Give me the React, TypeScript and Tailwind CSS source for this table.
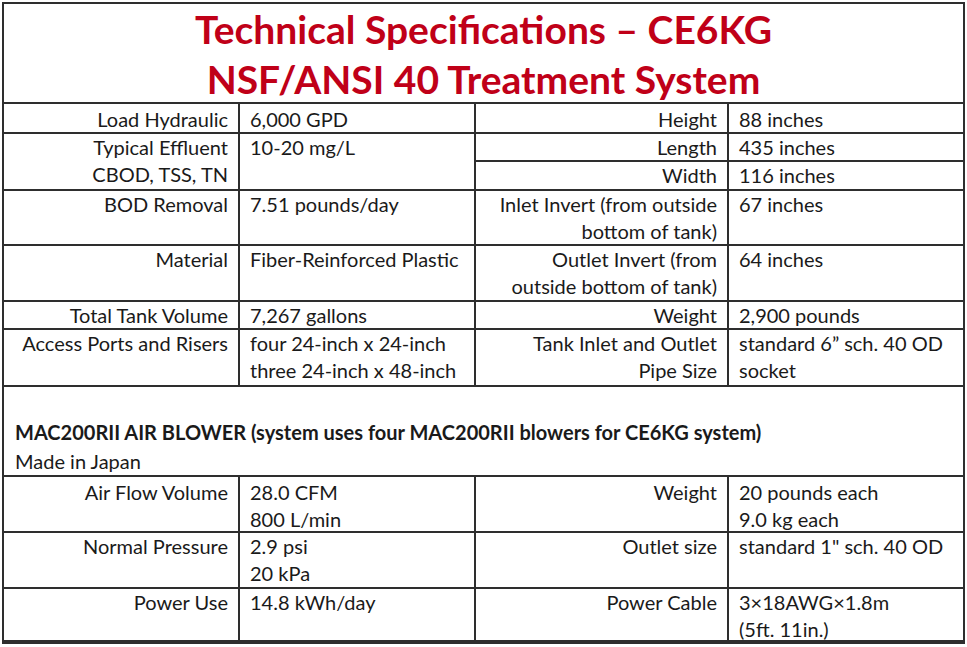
function Label({ lines, className = '' }: { lines: string[]; className?: string }) {
  return (
    <div className={`border-b-2 border-r-2 border-[#2e2e2e] pr-[10px] text-right leading-[27px] ${className}`}>
      {lines.map((t) => (
        <div key={t}>{t}</div>
      ))}
    </div>
  )
}

function Value({ lines, last = false, className = '' }: { lines: string[]; last?: boolean; className?: string }) {
  return (
    <div className={`border-b-2 border-[#2e2e2e] pl-[10px] leading-[27px] ${last ? '' : 'border-r-2'} ${className}`}>
      {lines.map((t) => (
        <div key={t}>{t}</div>
      ))}
    </div>
  )
}

export default function App() {
  return (
    <div className="min-h-screen bg-white pl-[2px] pt-[2px] font-['Lato','Liberation_Sans',sans-serif] text-[20px] leading-[28px] text-[#1a1a1a]">
      <div className="w-[963px] border-2 border-[#2e2e2e]">
        {/* Title */}
        <div className="h-[100px] border-b-2 border-[#2e2e2e] text-center text-[39px] font-bold leading-[50px] text-[#c00018]">
          <div>Technical Specifications – CE6KG</div>
          <div>NSF/ANSI 40 Treatment System</div>
        </div>

        {/* Tank specs */}
        <div className="grid grid-cols-[236px_236px_253px_234px] grid-rows-[30px_28px_29px_55px_56px_28px_57px]">
          <Label lines={['Load Hydraulic']} className="pt-[2px]" />
          <Value lines={['6,000 GPD']} className="pt-[2px]" />
          <Label lines={['Height']} className="pt-[2px]" />
          <Value lines={['88 inches']} last className="pt-[2px]" />

          <Label lines={['Typical Effluent', 'CBOD, TSS, TN']} className="row-span-2" />
          <Value lines={['10-20 mg/L']} className="row-span-2" />
          <Label lines={['Length']} />
          <Value lines={['435 inches']} last />
          <Label lines={['Width']} />
          <Value lines={['116 inches']} last />

          <Label lines={['BOD Removal']} />
          <Value lines={['7.51 pounds/day']} />
          <Label lines={['Inlet Invert (from outside', 'bottom of tank)']} />
          <Value lines={['67 inches']} last />

          <Label lines={['Material']} />
          <Value lines={['Fiber-Reinforced Plastic']} />
          <Label lines={['Outlet Invert (from', 'outside bottom of tank)']} />
          <Value lines={['64 inches']} last />

          <Label lines={['Total Tank Volume']} />
          <Value lines={['7,267 gallons']} />
          <Label lines={['Weight']} />
          <Value lines={['2,900 pounds']} last />

          <Label lines={['Access Ports and Risers']} />
          <Value lines={['four 24-inch x 24-inch', 'three 24-inch x 48-inch']} />
          <Label lines={['Tank Inlet and Outlet', 'Pipe Size']} />
          <Value lines={['standard 6” sch. 40 OD', 'socket']} last />
        </div>

        {/* Blower heading */}
        <div className="h-[90px] border-b-2 border-[#2e2e2e] pl-[11px] pt-[31px] leading-[29px]">
          <div className="font-bold">
            MAC200RII AIR BLOWER (system uses four MAC200RII blowers for CE6KG system)
          </div>
          <div>Made in Japan</div>
        </div>

        {/* Blower specs */}
        <div className="grid grid-cols-[236px_236px_253px_234px] grid-rows-[56px_56px_53px]">
          <Label lines={['Air Flow Volume']} className="pt-[2px]" />
          <Value lines={['28.0 CFM', '800 L/min']} className="pt-[2px]" />
          <Label lines={['Weight']} className="pt-[2px]" />
          <Value lines={['20 pounds each', '9.0 kg each']} last className="pt-[2px]" />

          <Label lines={['Normal Pressure']} />
          <Value lines={['2.9 psi', '20 kPa']} />
          <Label lines={['Outlet size']} />
          <Value lines={['standard 1" sch. 40 OD']} last />

          <Label lines={['Power Use']} className="border-b-0" />
          <Value lines={['14.8 kWh/day']} className="border-b-0" />
          <Label lines={['Power Cable']} className="border-b-0" />
          <Value lines={['3×18AWG×1.8m', '(5ft. 11in.)']} last className="border-b-0" />
        </div>
      </div>
    </div>
  )
}
